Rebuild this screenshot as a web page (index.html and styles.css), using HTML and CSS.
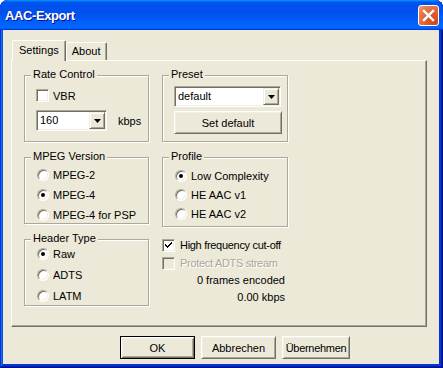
FILE: index.html
```html
<!DOCTYPE html>
<html lang="de">
<head>
  <meta charset="UTF-8">
  <title>AAC-Export</title>
  <link rel="stylesheet" href="styles.css">
</head>
<body>

  <div class="window">
    <div class="titlebar">
      <span class="title">AAC-Export</span>
      <div class="close">
        <svg width="19" height="19" viewBox="0 0 19 19">
          <path d="M5 5 L14 14 M14 5 L5 14" stroke="#fff" stroke-width="2.4" stroke-linecap="square"/>
        </svg>
      </div>
    </div>

    <div class="client">
      <div class="tabstrip">
        <div class="tab active">Settings</div>
        <div class="tab">About</div>
      </div>

      <div class="panel">
        <!-- linke Spalte -->
        <div class="col">
          <div class="group rate">
            <span class="group-label">Rate Control</span>
            <div class="check"><span class="box"></span>VBR</div>
            <div class="combo-row">
              <div class="combo bitrate">
                <span class="combo-text">160</span>
                <span class="drop"><svg width="7" height="4" viewBox="0 0 7 4"><path d="M0 0 H7 L3.5 4 Z" fill="#000"/></svg></span>
              </div>
              <span>kbps</span>
            </div>
          </div>

          <div class="group radios mpeg">
            <span class="group-label">MPEG Version</span>
            <div class="radio"><span class="dot"></span>MPEG-2</div>
            <div class="radio"><span class="dot on"></span>MPEG-4</div>
            <div class="radio"><span class="dot"></span>MPEG-4 for PSP</div>
          </div>

          <div class="group radios header">
            <span class="group-label">Header Type</span>
            <div class="radio"><span class="dot on"></span>Raw</div>
            <div class="radio"><span class="dot"></span>ADTS</div>
            <div class="radio"><span class="dot"></span>LATM</div>
          </div>
        </div>

        <!-- rechte Spalte -->
        <div class="col">
          <div class="group preset">
            <span class="group-label">Preset</span>
            <div class="combo preset-combo">
              <span class="combo-text">default</span>
              <span class="drop"><svg width="7" height="4" viewBox="0 0 7 4"><path d="M0 0 H7 L3.5 4 Z" fill="#000"/></svg></span>
            </div>
            <button class="btn set-default">Set default</button>
          </div>

          <div class="group radios profile">
            <span class="group-label">Profile</span>
            <div class="radio"><span class="dot on"></span>Low Complexity</div>
            <div class="radio"><span class="dot"></span>HE AAC v1</div>
            <div class="radio"><span class="dot"></span>HE AAC v2</div>
          </div>

          <div class="options">
            <div class="check">
              <span class="box">
                <svg width="7" height="7" viewBox="0 0 7 7"><path d="M0 2 L2 4 L6 0 L7 1 L2 6 L0 4 Z" fill="#000" shape-rendering="crispEdges"/></svg>
              </span>High frequency cut-off
            </div>
            <div class="check disabled"><span class="box"></span>Protect ADTS stream</div>
            <div class="status">0 frames encoded</div>
            <div class="status">0.00 kbps</div>
          </div>
        </div>
      </div>

      <div class="buttons">
        <button class="btn default">OK</button>
        <button class="btn">Abbrechen</button>
        <button class="btn apply">Übernehmen</button>
      </div>
    </div>
  </div>

</body>
</html>
```

FILE: styles.css
```css
/* Grundlayout */
* {
  box-sizing: border-box;
}

body {
  margin: 0;
  background-color: #fff;
  font-family: 'Liberation Sans', Arial, sans-serif;
  font-size: 11px;
  color: #000;
  white-space: nowrap;
}

/* Fensterrahmen */
.window {
  width: 443px;
  height: 368px;
  display: flex;
  flex-direction: column;
  background-color: #0831d9;
  border-radius: 8px 8px 0 0;
  overflow: hidden;
  box-shadow: inset -1px -1px #00138c, inset 1px 1px #0831d9,
              inset -2px -2px #001ea0, inset 2px 2px #166aee,
              inset -3px -3px #003bda, inset 3px 3px #0855dd;
}

.titlebar {
  height: 30px;
  flex: none;
  display: flex;
  justify-content: space-between;
  align-items: center;
  padding: 0 4px 0 5px;
  border-radius: 8px 8px 0 0;
  background: linear-gradient(180deg, #0997ff, #0053ee 8%, #0050ee 40%, #0066ff 88%, #0066ff 93%, #005bff 95%, #003dd7 96%, #003dd7);
}

.title {
  color: #fff;
  font-weight: bold;
  font-size: 13px;
  letter-spacing: -0.4px;
  text-shadow: 1px 1px #0f1089;
  margin-top: 1px;
}

.close {
  width: 21px;
  height: 21px;
  border: 1px solid #fff;
  border-radius: 3px;
  background: radial-gradient(circle at 85% 85%, #cc4a1a 0%, #e0602f 45%, #e87a52 75%, #f0a286 100%);
  margin-top: 1px;
}

.close svg {
  display: block;
}

/* Innenbereich */
.client {
  flex: 1;
  margin: 0 4px 4px 3px;
  background-color: #ece9d8;
  padding: 10px 0 0 8px;
}

/* Reiter */
.tabstrip {
  display: flex;
  align-items: flex-end;
  height: 20px;
  padding-left: 1px;
}

.tab {
  height: 18px;
  padding: 2px 5px 0 5px;
  border: 1px solid;
  border-bottom: none;
  border-color: #fff #716f64 #716f64 #fff;
  border-radius: 2px 2px 0 0;
  box-shadow: inset -1px 0 #aca899;
  background-color: #ece9d8;
}

.tab.active {
  height: 21px;
  padding: 3px 6px 0 6px;
  margin-bottom: -1px;
  position: relative;
  z-index: 1;
}

/* Register-Inhalt */
.panel {
  width: 416px;
  height: 267px;
  border: 1px solid;
  border-color: #fff #716f64 #716f64 #fff;
  box-shadow: inset -1px -1px #aca899;
  padding: 14px 0 0 12px;
  display: grid;
  grid-template-columns: 125px 126px;
  column-gap: 13px;
  align-items: start;
}

.col {
  display: flex;
  flex-direction: column;
}

/* Gruppenrahmen */
.group {
  position: relative;
  border: 1px solid #aca899;
  box-shadow: inset 1px 1px #fff, 1px 1px #fff;
  height: 67px;
}

.group + .group {
  margin-top: 15px;
}

.group-label {
  position: absolute;
  top: -8px;
  left: 6px;
  line-height: 13px;
  padding: 0 2px;
  background-color: #ece9d8;
}

.rate {
  padding: 13px 0 0 11px;
}

.preset {
  padding: 10px 0 0 11px;
}

.radios {
  padding-left: 12px;
}

.mpeg {
  padding-top: 7px;
}

.header {
  padding-top: 3px;
}

.header .radio {
  height: 21px;
}

.profile {
  height: 70px;
  padding-top: 8px;
}

.profile .radio {
  height: 19px;
}

/* Kontrollkästchen */
.check {
  display: flex;
  align-items: center;
  gap: 4px;
  height: 13px;
}

.box {
  width: 13px;
  height: 13px;
  flex: none;
  display: flex;
  align-items: center;
  justify-content: center;
  background-color: #fff;
  border: 1px solid;
  border-color: #aca899 #fff #fff #aca899;
  box-shadow: inset 1px 1px #716f64, inset -1px -1px #f1efe2;
}

.check.disabled {
  color: #aca899;
  text-shadow: 1px 1px #fff;
}

.check.disabled .box {
  background-color: #ece9d8;
}

/* Optionsfelder */
.radio {
  display: flex;
  align-items: center;
  gap: 4px;
  height: 20px;
}

.dot {
  width: 12px;
  height: 12px;
  flex: none;
  border-radius: 50%;
  background-color: #fff;
  border: 1px solid;
  border-color: #aca899 #fff #fff #aca899;
  box-shadow: inset 1px 1px #716f64, inset -1px -1px #f1efe2;
  display: flex;
  align-items: center;
  justify-content: center;
}

.dot.on::after {
  content: '';
  width: 4px;
  height: 4px;
  border-radius: 50%;
  background-color: #000;
}

/* Kombinationsfelder */
.combo-row {
  display: flex;
  align-items: center;
  gap: 11px;
  margin-top: 8px;
}

.combo {
  display: flex;
  height: 21px;
  padding: 1px;
  background-color: #fff;
  border: 1px solid;
  border-color: #aca899 #fff #fff #aca899;
  box-shadow: inset 1px 1px #716f64, inset -1px -1px #f1efe2;
}

.combo-text {
  flex: 1;
  padding-left: 2px;
  line-height: 17px;
}

.drop {
  width: 16px;
  height: 17px;
  display: flex;
  align-items: center;
  justify-content: center;
  background-color: #ece9d8;
  border: 1px solid;
  border-color: #f1efe2 #716f64 #716f64 #f1efe2;
  box-shadow: inset 1px 1px #fff, inset -1px -1px #aca899;
}

.bitrate {
  width: 71px;
}

.preset-combo {
  width: 107px;
}

/* Schaltflächen */
.btn {
  height: 23px;
  padding: 0;
  font-family: 'Liberation Sans', Arial, sans-serif;
  font-size: 11px;
  color: #000;
  background-color: #ece9d8;
  border: 1px solid;
  border-color: #fff #716f64 #716f64 #fff;
  box-shadow: inset 1px 1px #f1efe2, inset -1px -1px #aca899;
}

.btn.default {
  border: 1px solid #000;
  box-shadow: inset 1px 1px #fff, inset -1px -1px #716f64,
              inset 2px 2px #f1efe2, inset -2px -2px #aca899;
}

.set-default {
  display: block;
  width: 108px;
  margin-top: 4px;
}

/* Zusatzoptionen */
.options {
  margin-top: 9px;
  padding-right: 3px;
  display: flex;
  flex-direction: column;
}

.options .check {
  height: 18px;
  gap: 5px;
  letter-spacing: -0.3px;
}

.status {
  text-align: right;
  line-height: 17px;
}

/* Fußleiste */
.buttons {
  display: flex;
  gap: 6px;
  margin: 9px 0 0 109px;
}

.buttons .btn {
  width: 75px;
}

.buttons .apply {
  width: 68px;
  letter-spacing: -0.3px;
}
```
